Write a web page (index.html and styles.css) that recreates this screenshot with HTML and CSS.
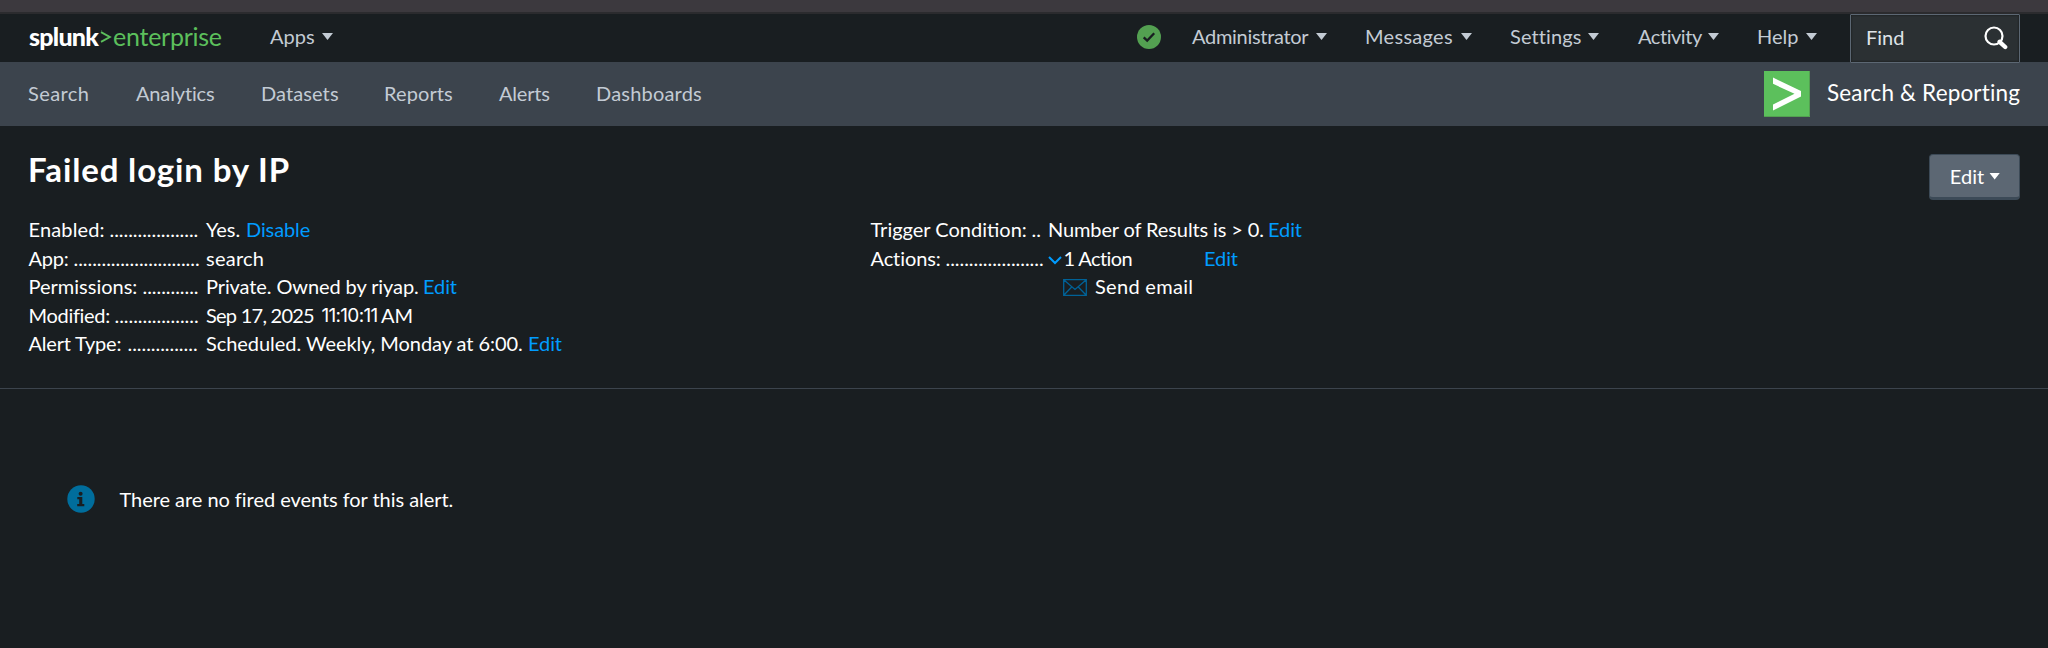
FILE: index.html
```
<!DOCTYPE html>
<html lang="en">
<head>
<meta charset="utf-8">
<title>Failed login by IP | Splunk</title>
<link rel="stylesheet" href="styles.css">
</head>
<body>
<div class="chrome"></div>
<header class="topbar">
  <a class="logo"><b>splunk</b><svg class="gt" width="12" height="15" viewBox="0 0 12 15"><path d="M1 2.2 9.8 7 1 11.8" fill="none" stroke="#5cc05c" stroke-width="1.9"/><circle cx="1.6" cy="0.9" r=".7" fill="#3f7a44"/></svg><span>enterprise</span></a>
  <a class="menu apps"><span>Apps</span><i class="caret"></i></a>
  <div class="right">
    <svg class="ok" width="24" height="24" viewBox="0 0 24 24"><circle cx="12" cy="12" r="12" fill="#53a051"/><path d="M6.7 12.3 10.2 15.6 17.2 8.3" fill="none" stroke="#191e21" stroke-width="2.3"/></svg>
    <a class="menu admin"><span>Administrator</span><i class="caret"></i></a>
    <a class="menu messages"><span>Messages</span><i class="caret"></i></a>
    <a class="menu settings"><span>Settings</span><i class="caret"></i></a>
    <a class="menu activity"><span>Activity</span><i class="caret"></i></a>
    <a class="menu help"><span>Help</span><i class="caret"></i></a>
    <div class="find"><span>Find</span><svg width="24" height="24" viewBox="0 0 24 24"><circle cx="10" cy="10" r="8.5" fill="none" stroke="#fff" stroke-width="2.2"/><path d="m15.6 15.8 5.6 5.2" stroke="#fff" stroke-width="4.3" stroke-linecap="round"/></svg></div>
  </div>
</header>
<nav class="appbar">
  <a class="n1">Search</a><a class="n2">Analytics</a><a class="n3">Datasets</a><a class="n4">Reports</a><a class="n5">Alerts</a><a class="n6">Dashboards</a>
  <div class="app"><svg width="46" height="46" viewBox="0 0 46 46"><path fill="#5cc05c" d="M0 0h46v46H0z"/><path fill="none" stroke="#53a051" d="M45.5 0v45.5H0"/><path fill="#fff" d="M9 6.500 37 20v5.500L9 39.500v-6L30.500 22.800 9 12.800z"/></svg><span>Search &amp; Reporting</span></div>
</nav>
<main>
  <div class="head"><h1>Failed login by IP</h1><button>Edit<i class="caret"></i></button></div>
  <div class="details">
    <dl>
      <div class="row"><dt><span class="l-enabled">Enabled:</span><s>...................</s></dt><dd><span class="v-yes">Yes.</span><a>Disable</a></dd></div>
      <div class="row"><dt><span class="l-app">App:</span><s>...........................</s></dt><dd><span class="v-search">search</span></dd></div>
      <div class="row"><dt><span class="l-perm">Permissions:</span><s>............</s></dt><dd><span class="v-private">Private. Owned by riyap.</span><a>Edit</a></dd></div>
      <div class="row"><dt><span class="l-mod">Modified:</span><s>..................</s></dt><dd><span class="v-date">Sep 17, 2025</span><span class="v-time">11:10:11</span><span>AM</span></dd></div>
      <div class="row"><dt><span class="l-type">Alert Type:</span><s>...............</s></dt><dd><span class="v-sched">Scheduled. Weekly, Monday at 6:00.</span><a>Edit</a></dd></div>
    </dl>
    <dl>
      <div class="row"><dt><span class="l-trig">Trigger Condition:</span><s>..</s></dt><dd><span class="v-num">Number of Results is &gt; 0.</span><a>Edit</a></dd></div>
      <div class="row"><dt><span class="l-act">Actions:</span><s>.....................</s></dt><dd><svg class="chev" width="14" height="9" viewBox="0 0 14 9"><path d="m1 1 6 6 6-6" fill="none" stroke="#009cff" stroke-width="2"/></svg><span class="v-one">1 Action</span><a>Edit</a></dd></div>
      <div class="row mail"><svg width="24" height="17" viewBox="0 0 24 17"><path d="M.7.7h22.600v15.600H.7zM1 1l11 9.500L23 1M1 16l7.700-8M23 16l-7.700-8" fill="none" stroke="#006297" stroke-width="1.300"/></svg><span>Send email</span></div>
    </dl>
  </div>
  <div class="empty"><svg width="28" height="28" viewBox="0 0 28 28"><circle cx="14" cy="14" r="13.700" fill="#006d9c"/><circle cx="13.600" cy="8.800" r="2" fill="#191e21"/><path d="M10.300 12h5v7h2v2.300h-7.100V19h2v-4.700h-1.900z" fill="#191e21"/></svg><span>There are no fired events for this alert.</span></div>
</main>
</body>
</html>
```
FILE: styles.css
```
* { box-sizing: border-box; }
body { margin: 0; height: 648px; overflow: hidden; background: #191e21; color: #fff; font: 20px/28.5px Lato, "Liberation Sans", sans-serif; }
.chrome { height: 14px; background: #3c393e; border-bottom: 2px solid #2b2b2e; }
h1, dl, dd { margin: 0; }
svg { display: block; flex: none; }
span, a { white-space: nowrap; }
.caret { width: 11px; height: 7px; background: currentColor; clip-path: polygon(0 0, 100% 0, 50% 100%); flex: none; }

.topbar { height: 48px; display: flex; align-items: center; padding: 0 28px 4px 29px; color: #c3cbd4; }
.logo { display: flex; align-items: center; width: 241px; font-size: 25px; }
.logo b { font-size: 25px; font-weight: 900; color: #fff; letter-spacing: -.75px; width: 71px; }
.gt { margin-top: 3px; }
.logo span { color: #5cc05c; letter-spacing: -.25px; margin-left: 1px; }
.menu { display: flex; align-items: center; justify-content: space-between; }
.menu .caret { margin-top: 1px; }
.apps { width: 63px; }
.right { margin-left: auto; display: flex; align-items: center; }
.ok { margin: 2px 31px 0 0; }
.admin { width: 135px; margin-right: 38px; letter-spacing: -.3px; }
.messages { width: 107px; margin-right: 38px; letter-spacing: .3px; }
.settings { width: 89px; margin-right: 39px; letter-spacing: .1px; }
.activity { width: 81px; margin-right: 38px; letter-spacing: -.45px; }
.help { width: 60px; margin-right: 33px; }
.find { width: 170px; height: 49px; margin: 5px 0 0; padding: 0 11px 2px 15px; border: 1px solid #5c6773; border-radius: 1px; background: #2b3033; color: #dfe3e8; display: flex; align-items: center; justify-content: space-between; box-shadow: inset 0 0 2px #111; }

.appbar { height: 64px; background: #3c444d; color: #c3cbd4; display: flex; align-items: center; padding: 0 28px 2px; }
.n1 { width: 108px; letter-spacing: .4px; }
.n2 { width: 125px; letter-spacing: -.15px; }
.n3 { width: 123px; letter-spacing: .1px; }
.n4 { width: 115px; letter-spacing: .1px; }
.n5 { width: 97px; letter-spacing: -.2px; }
.n6 { letter-spacing: .2px; }
.app { margin-left: auto; display: flex; align-items: center; gap: 17px; color: #fff; font-size: 22.5px; letter-spacing: .15px; }
.app svg { margin-top: 2px; }
.app span { padding-top: 1px; }

.head { display: flex; justify-content: space-between; padding: 28px 28px 0; height: 89px; }
h1 { font-size: 33px; line-height: 31px; font-weight: 700; letter-spacing: .85px; }
button { width: 91px; height: 46px; border: 1px solid #3c4a57; border-bottom-width: 3px; border-radius: 4px; background: #5c6773; color: #fff; font: inherit; padding: 0 0 0 1px; display: flex; align-items: center; justify-content: center; gap: 5px; }
.details { display: grid; grid-template-columns: 842px 1fr; padding: 0 27px 0 28.5px; height: 174px; border-bottom: 1px solid #3c444d; }
.row { height: 28.5px; display: flex; }
dt { width: 170.5px; margin-right: 7px; display: flex; }
dt span { flex: none; }
dt s { text-decoration: none; letter-spacing: -.05px; }
dd { display: flex; }
dd a { color: #009cff; letter-spacing: -.1px; }
.l-enabled { width: 81px; letter-spacing: .15px; }
.l-app { width: 45px; letter-spacing: -.2px; }
.l-perm { width: 114px; }
.l-mod { width: 86px; letter-spacing: -.3px; }
.l-type { width: 99px; letter-spacing: -.2px; }
.v-yes { width: 40px; }
.v-search { letter-spacing: .25px; }
.v-private { width: 217px; letter-spacing: -.1px; }
.v-date { width: 115.5px; letter-spacing: -.75px; }
.v-time { width: 59.5px; padding-top: 1px; font-family: Inter, Lato, sans-serif; font-size: 19px; letter-spacing: -.7px; }
.v-sched { width: 322px; letter-spacing: -.05px; }
.l-trig { width: 161px; }
.l-act { width: 75px; letter-spacing: -.1px; }
.v-num { width: 220px; letter-spacing: -.12px; }
.chev { margin: 12px 1.5px 0 0; }
.v-one { width: 140.5px; letter-spacing: -.6px; }
.mail { padding-left: 192.500px; gap: 8px; letter-spacing: .3px; }
.mail svg { margin-top: 7px; }
.empty { display: flex; align-items: center; padding: 95.500px 0 0 66.500px; gap: 25px; letter-spacing: -.05px; }
```
